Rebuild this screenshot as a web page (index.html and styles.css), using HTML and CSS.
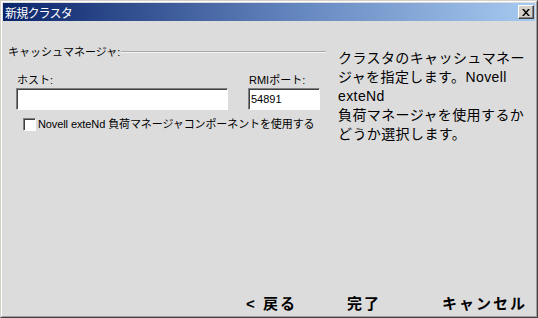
FILE: index.html
```html
<!DOCTYPE html>
<html lang="ja">
  <head>
    <meta charset="UTF-8" />
    <title>新規クラスタ</title>
    <link rel="stylesheet" href="styles.css">
  </head>
  <body>
    <div class="window">
      <div class="frame">
        <div class="titlebar">
          <span class="title">新規クラスタ</span>
          <button class="close-button">
            <svg width="8" height="7" viewBox="0 0 8 7">
              <path d="M0 0h2l2 2.5 2-2.5h2l-3 3.5 3 3.5h-2l-2-2.5-2 2.5h-2l3-3.5z" fill="#000" />
            </svg>
          </button>
        </div>
        <div class="body">
          <div class="main">
            <div class="left">
              <div class="section-title">キャッシュマネージャ:</div>
              <div class="fields">
                <div class="field host">
                  <label>ホスト:</label>
                  <input type="text" class="text-input" value="" />
                </div>
                <div class="field port">
                  <label>RMIポート:</label>
                  <input type="text" class="text-input" value="54891" />
                </div>
              </div>
              <label class="check-row">
                <input type="checkbox" class="check" />
                <span>Novell exteNd 負荷マネージャコンポーネントを使用する</span>
              </label>
            </div>
            <div class="right">
              クラスタのキャッシュマネー<br>ジャを指定します。Novell<br>exteNd<br>負荷マネージャを使用するか<br>どうか選択します。
            </div>
          </div>
          <div class="footer">
            <button class="nav-button back">&lt; 戻る</button>
            <button class="nav-button finish">完了</button>
            <button class="nav-button cancel">キャンセル</button>
          </div>
        </div>
      </div>
    </div>
  </body>
</html>
```

FILE: styles.css
```css
body {
  margin: 0;
  background-color: #dcdcdc;
  font-family: "Liberation Sans", "Noto Sans CJK JP", sans-serif;
  color: #000;
}
.window {
  width: 538px;
  height: 318px;
  box-sizing: border-box;
  border: 1px solid;
  border-color: #d4d0c8 #404040 #404040 #d4d0c8;
}
.frame {
  height: 100%;
  box-sizing: border-box;
  border: 1px solid;
  border-color: #fff #a0a0a0 #a0a0a0 #fff;
  padding: 1px;
  display: flex;
  flex-direction: column;
}
.titlebar {
  height: 18px;
  display: flex;
  align-items: center;
  justify-content: space-between;
  padding: 0 1px 0 2px;
  background: linear-gradient(to right, #0a246a, #6486bf 55%, #a6caf0);
}
.title {
  color: #fff;
  font-size: 12px;
  letter-spacing: -0.8px;
}
.close-button {
  width: 16px;
  height: 14px;
  padding: 0;
  display: flex;
  align-items: center;
  justify-content: center;
  background-color: #d4d0c8;
  border: 1px solid;
  border-color: #fff #404040 #404040 #fff;
  box-shadow: inset -1px -1px #808080;
}
.body {
  flex: 1;
  display: flex;
  flex-direction: column;
  padding: 25px 8px 2px 5px;
}
.main {
  display: flex;
}
.left {
  width: 318px;
  flex-shrink: 0;
  font-size: 11px;
}
.section-title {
  display: flex;
  align-items: center;
  gap: 1px;
  line-height: 13px;
}
.section-title::after {
  content: "";
  flex: 1;
  margin-top: -2px;
  border-top: 1px solid #a8a8a8;
  border-bottom: 1px solid #f4f4f4;
}
.fields {
  display: flex;
  gap: 20px;
  margin: 15px 0 0 8px;
}
.field {
  display: flex;
  flex-direction: column;
  gap: 1px;
}
.field label {
  line-height: 13px;
  padding-left: 1px;
}
.text-input {
  box-sizing: border-box;
  height: 22px;
  margin: 0;
  padding: 0 2px;
  font-family: "Liberation Sans", sans-serif;
  font-size: 11px;
  background-color: #fff;
  border: 1px solid;
  border-color: #808080 #fff #fff #808080;
  box-shadow: inset 1px 1px #404040;
  outline: none;
}
.host .text-input {
  width: 212px;
}
.port .text-input {
  width: 72px;
}
.check-row {
  display: flex;
  align-items: center;
  gap: 2px;
  margin: 8px 0 0 15px;
  line-height: 13px;
  letter-spacing: -0.1px;
}
.check {
  appearance: none;
  width: 13px;
  height: 13px;
  margin: 0;
  background-color: #fff;
  border: 1px solid;
  border-color: #808080 #fff #fff #808080;
  box-shadow: inset 1px 1px #404040;
}
.right {
  margin: 3px 0 0 12px;
  font-size: 14px;
  line-height: 19px;
  letter-spacing: 0.4px;
  white-space: nowrap;
}
.footer {
  margin-top: auto;
  display: flex;
  justify-content: flex-end;
}
.nav-button {
  padding: 0;
  border: none;
  background: none;
  font-family: "Liberation Sans", "Noto Sans CJK JP", sans-serif;
  font-size: 15px;
  font-weight: bold;
  line-height: 18px;
  letter-spacing: 2px;
}
.finish {
  margin-left: 50px;
}
.cancel {
  margin-left: 61px;
}
```
